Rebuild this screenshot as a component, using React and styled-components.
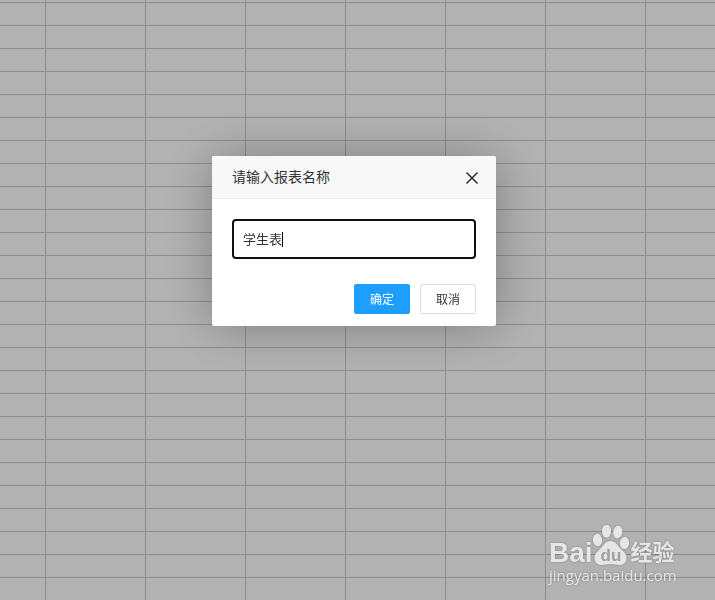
import React, { useState } from 'react';
import styled, { createGlobalStyle } from 'styled-components';

const color = {
  primary: '#1e9fff',
  text: '#333',
  line: '#eee',
  grid: '#cbcbcb',
  mark: '#e6e6e6',
};

const GlobalStyle = createGlobalStyle`
  * {
    box-sizing: border-box;
  }

  body {
    margin: 0;
    color: ${color.text};
    font-family: 'Liberation Sans', 'Noto Sans CJK SC', sans-serif;
    font-size: 14px;
  }

  button,
  input {
    font-family: inherit;
  }
`;

const Sheet = styled.main`
  min-height: 100vh;
  background-color: #fff;
  background-image: linear-gradient(to right, ${color.grid} 1px, transparent 1px),
    linear-gradient(to bottom, ${color.grid} 1px, transparent 1px);
  background-size: 100px 100%, 100% 23px;
  background-position: 45px 0, 0 2px;
`;

const Shade = styled.div`
  position: fixed;
  inset: 0;
  display: flex;
  justify-content: center;
  align-items: flex-start;
  padding: 156px 7px 0 0;
  background: rgba(0, 0, 0, 0.3);
`;

const Dialog = styled.form`
  width: 284px;
  background: #fff;
  border-radius: 2px;
  box-shadow: 1px 1px 50px rgba(0, 0, 0, 0.3);
`;

const DialogHeader = styled.header`
  display: flex;
  align-items: center;
  justify-content: space-between;
  height: 43px;
  padding: 0 16px 0 20px;
  background: #f8f8f8;
  border-bottom: 1px solid ${color.line};
  border-radius: 2px 2px 0 0;
`;

const Title = styled.label`
  line-height: 42px;
`;

const CloseButton = styled.button`
  display: flex;
  padding: 2px 0 0;
  border: 0;
  background: none;
  color: #2d2c3b;
  cursor: pointer;
`;

const DialogBody = styled.div`
  padding: 20px 20px 25px;
`;

const Field = styled.div`
  position: relative;
  font-size: 13px;
`;

const TextInput = styled.input`
  display: block;
  width: 100%;
  height: 40px;
  padding: 0 9px 2px;
  border: 2px solid #101010;
  border-radius: 4px;
  outline: 0;
  background: #fff;
  color: ${color.text};
  caret-color: transparent;
  font-size: 13px;
`;

// caret sits right behind the typed text
const Caret = styled.span`
  position: absolute;
  top: 13px;
  left: 11px;
  border-right: 1px solid #000;
  color: transparent;
  line-height: 15px;
  white-space: pre;
  pointer-events: none;
`;

const DialogFooter = styled.footer`
  display: flex;
  justify-content: flex-end;
  gap: 10px;
  padding: 0 20px 12px;
`;

const Button = styled.button`
  height: 30px;
  padding: 2px 15px 0;
  border: 1px solid ${({ $primary }) => ($primary ? color.primary : '#dedede')};
  border-radius: 2px;
  background: ${({ $primary }) => ($primary ? color.primary : '#fff')};
  color: ${({ $primary }) => ($primary ? '#fff' : color.text)};
  font-size: 12px;
  line-height: 26px;
  cursor: pointer;
`;

const Watermark = styled.aside`
  position: fixed;
  right: 38px;
  bottom: 16px;
  width: 128px;
  color: ${color.mark};
  filter: drop-shadow(0 0 1px rgba(0, 0, 0, 0.25));
`;

const LogoRow = styled.div`
  display: flex;
  align-items: flex-end;
  height: 42px;
`;

const LogoText = styled.span`
  font-family: 'Liberation Sans', sans-serif;
  font-size: 28px;
  font-weight: 700;
  line-height: 26px;
`;

const PawIcon = styled.svg`
  flex: none;
  width: 38px;
  height: 42px;
  margin-left: -2px;
`;

const LogoName = styled.span`
  margin-left: 2px;
  font-size: 22px;
  font-weight: 700;
  line-height: 26px;
  white-space: nowrap;
`;

const SiteLink = styled.a`
  display: block;
  color: inherit;
  font-family: 'Open Sans', 'Noto Sans', sans-serif;
  font-size: 15px;
  line-height: 18px;
  text-decoration: none;
`;

const CloseIcon = () => (
  <svg width="16" height="16" viewBox="0 0 16 16" aria-hidden="true">
    <path d="M2.5 2.5 13.5 13.5M13.5 2.5 2.5 13.5" stroke="currentColor" strokeWidth="1.5" fill="none" />
  </svg>
);

const Paw = () => (
  <PawIcon viewBox="0 0 38 42" aria-hidden="true">
    <g fill="currentColor">
      <ellipse cx="6.5" cy="16" rx="4.6" ry="6.2" transform="rotate(-6 6.5 16)" />
      <ellipse cx="15.5" cy="7.2" rx="4.5" ry="6.5" />
      <ellipse cx="26.8" cy="8" rx="4.6" ry="6.3" transform="rotate(8 26.8 8)" />
      <ellipse cx="33.5" cy="19" rx="4.6" ry="6" transform="rotate(4 33.5 19)" />
      <path d="M19.5 17C14.5 17 12.5 21.5 9.5 24.5C6 28 3.5 30 3.5 34C3.5 38.5 6.5 41 10.5 41C14 41 16.5 40.3 19.5 40.3C22.5 40.3 25 41 28.5 41C32.5 41 35.5 38.5 35.5 34C35.5 30 33 28 29.5 24.5C26.5 21.5 24.5 17 19.5 17Z" />
    </g>
    <text
      x="20"
      y="37"
      textAnchor="middle"
      fill="#a0a0a0"
      fontFamily="Liberation Sans, sans-serif"
      fontSize="17"
      fontWeight="700"
    >
      du
    </text>
  </PawIcon>
);

const App = () => {
  const [name, setName] = useState('学生表');

  return (
    <>
      <GlobalStyle />
      <Sheet />
      <Shade>
        <Dialog role="dialog" onSubmit={(e) => e.preventDefault()}>
          <DialogHeader>
            <Title htmlFor="report-name">请输入报表名称</Title>
            <CloseButton type="button" aria-label="关闭">
              <CloseIcon />
            </CloseButton>
          </DialogHeader>
          <DialogBody>
            <Field>
              <TextInput
                id="report-name"
                type="text"
                value={name}
                onChange={(e) => setName(e.target.value)}
                autoFocus
              />
              <Caret aria-hidden="true">{name}</Caret>
            </Field>
          </DialogBody>
          <DialogFooter>
            <Button type="submit" $primary>
              确定
            </Button>
            <Button type="button">取消</Button>
          </DialogFooter>
        </Dialog>
      </Shade>
      <Watermark>
        <LogoRow>
          <LogoText>Bai</LogoText>
          <Paw />
          <LogoName>经验</LogoName>
        </LogoRow>
        <SiteLink href="#">jingyan.baidu.com</SiteLink>
      </Watermark>
    </>
  );
};

export default App;
